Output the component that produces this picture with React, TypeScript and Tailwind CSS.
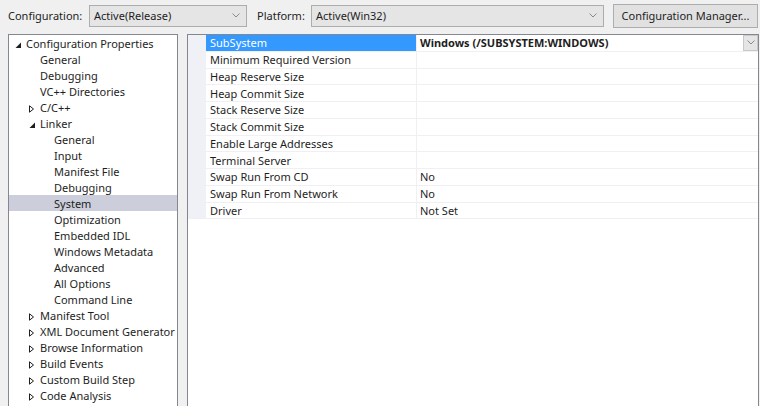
import React from "react";

type TreeItem = { label: string; level: number; exp?: "open" | "closed"; sel?: boolean };

const tree: TreeItem[] = [
  { label: "Configuration Properties", level: 0, exp: "open" },
  { label: "General", level: 1 },
  { label: "Debugging", level: 1 },
  { label: "VC++ Directories", level: 1 },
  { label: "C/C++", level: 1, exp: "closed" },
  { label: "Linker", level: 1, exp: "open" },
  { label: "General", level: 2 },
  { label: "Input", level: 2 },
  { label: "Manifest File", level: 2 },
  { label: "Debugging", level: 2 },
  { label: "System", level: 2, sel: true },
  { label: "Optimization", level: 2 },
  { label: "Embedded IDL", level: 2 },
  { label: "Windows Metadata", level: 2 },
  { label: "Advanced", level: 2 },
  { label: "All Options", level: 2 },
  { label: "Command Line", level: 2 },
  { label: "Manifest Tool", level: 1, exp: "closed" },
  { label: "XML Document Generator", level: 1, exp: "closed" },
  { label: "Browse Information", level: 1, exp: "closed" },
  { label: "Build Events", level: 1, exp: "closed" },
  { label: "Custom Build Step", level: 1, exp: "closed" },
  { label: "Code Analysis", level: 1, exp: "closed" },
];

const props: [string, string][] = [
  ["SubSystem", "Windows (/SUBSYSTEM:WINDOWS)"],
  ["Minimum Required Version", ""],
  ["Heap Reserve Size", ""],
  ["Heap Commit Size", ""],
  ["Stack Reserve Size", ""],
  ["Stack Commit Size", ""],
  ["Enable Large Addresses", ""],
  ["Terminal Server", ""],
  ["Swap Run From CD", "No"],
  ["Swap Run From Network", "No"],
  ["Driver", "Not Set"],
];

const indent = ["pl-[17px]", "pl-[31px]", "pl-[45px]"];

function Chevron() {
  return (
    <svg width="8" height="5" viewBox="0 0 8 5" className="shrink-0">
      <path d="M0.5 0.5 L4 4 L7.5 0.5" fill="none" stroke="#8a8a8a" strokeWidth="1" />
    </svg>
  );
}

function Expander({ kind }: { kind: "open" | "closed" }) {
  if (kind === "open") {
    return (
      <svg width="7" height="7" viewBox="0 0 7 7" className="absolute left-[-11px] top-[4px]">
        <path d="M6 0.5 L6 6 L0.5 6 Z" fill="#1e1e1e" />
      </svg>
    );
  }
  return (
    <svg width="7" height="8" viewBox="0 0 7 8" className="absolute left-[-12px] top-[3px]">
      <path d="M1.5 0.8 L5.5 4 L1.5 7.2 Z" fill="none" stroke="#1e1e1e" strokeWidth="1" />
    </svg>
  );
}

export default function App() {
  return (
    <div
      className="w-[760px] h-[406px] overflow-hidden bg-[#f0f0f0] text-[11px] text-[#1e1e1e] leading-none"
      style={{ fontFamily: '"Noto Sans", "Liberation Sans", sans-serif' }}
    >
      {/* top bar */}
      <div className="flex items-center h-[30px] pt-[1px]">
        <span className="ml-[8px] w-[81px]">Configuration:</span>
        <div className="flex items-center justify-between w-[158px] h-[22px] border border-[#adadad] bg-[#e5e5e5] pl-[4px] pr-[6px]">
          <span>Active(Release)</span>
          <Chevron />
        </div>
        <span className="ml-[10px] w-[54px]">Platform:</span>
        <div className="flex items-center justify-between w-[293px] h-[22px] border border-[#adadad] bg-[#e5e5e5] pl-[4px] pr-[6px]">
          <span>Active(Win32)</span>
          <Chevron />
        </div>
        <div className="ml-[9px] flex items-center justify-center w-[145px] h-[24px] border border-[#adadad] bg-[#e1e1e1]">
          Configuration Manager...
        </div>
      </div>

      {/* main */}
      <div className="flex mt-[4px] h-[372px]">
        {/* tree */}
        <div className="ml-[8px] w-[170px] h-[380px] border border-[#828790] bg-white overflow-hidden">
          {tree.map((t, i) => (
            <div
              key={i}
              className={`h-[16px] flex items-center whitespace-nowrap ${indent[t.level]} ${t.sel ? "bg-[#cccedb]" : ""}`}
            >
              <span className="relative">
                {t.exp && <Expander kind={t.exp} />}
                {t.label}
              </span>
            </div>
          ))}
        </div>

        {/* property grid */}
        <div className="ml-[9px] w-[572px] h-[380px] border border-[#828790] bg-white overflow-hidden">
          {props.map(([name, value], i) => (
            <div key={i} className="flex h-[16.75px] border-b border-[#f0f0f4]">
              <div className="w-[18px] bg-[#eff1f7]" />
              <div
                className={`w-[211px] flex items-center pl-[4px] border-r border-[#f0f0f4] whitespace-nowrap ${
                  i === 0 ? "bg-[#3399ff] text-white" : ""
                }`}
              >
                {name}
              </div>
              <div className={`flex-1 flex items-center pl-[3px] whitespace-nowrap ${i === 0 ? "font-bold" : ""}`}>
                {value}
              </div>
              {i === 0 && (
                <div className="w-[15px] flex items-center justify-center bg-[#e5e5e5] border border-[#c8c8c8]">
                  <Chevron />
                </div>
              )}
            </div>
          ))}
        </div>
      </div>
    </div>
  );
}
